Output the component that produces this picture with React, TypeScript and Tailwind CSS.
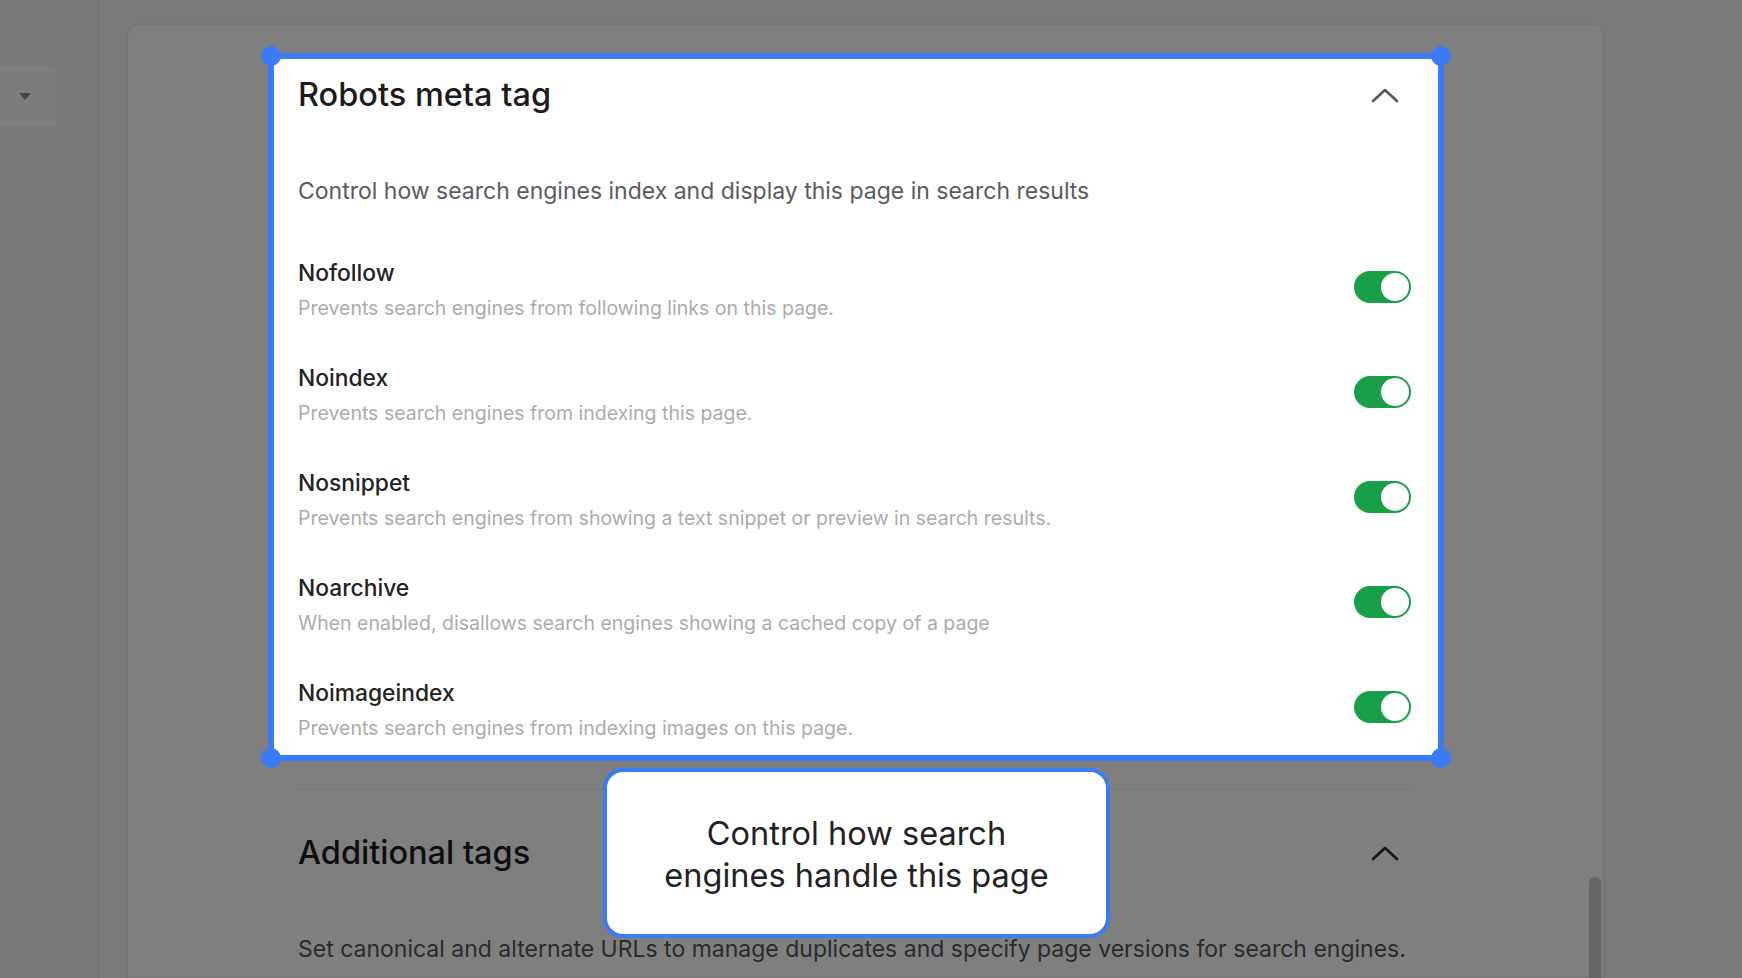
import React from "react";

const rows = [
  { title: "Nofollow", desc: "Prevents search engines from following links on this page." },
  { title: "Noindex", desc: "Prevents search engines from indexing this page." },
  { title: "Nosnippet", desc: "Prevents search engines from showing a text snippet or preview in search results." },
  { title: "Noarchive", desc: "When enabled, disallows search engines showing a cached copy of a page" },
  { title: "Noimageindex", desc: "Prevents search engines from indexing images on this page." },
];

const Chevron = ({ className = "" }: { className?: string }) => (
  <span className={`flex h-10 w-10 items-center justify-center ${className}`}>
    <svg width="28" height="16" viewBox="0 0 28 16" fill="none">
      <polyline points="2,14 14,3 26,14" stroke="currentColor" strokeWidth="2.6" strokeLinecap="round" strokeLinejoin="round" />
    </svg>
  </span>
);

const Toggle = () => (
  <span className="mt-[13px] flex h-[32px] w-[57px] shrink-0 items-center justify-end rounded-full bg-[#17a049] p-[2px]">
    <span className="h-[28px] w-[28px] rounded-full bg-white" />
  </span>
);

const Handle = ({ pos }: { pos: string }) => (
  <span className={`absolute h-[20px] w-[20px] rounded-full bg-[#3b7cf6] ${pos}`} />
);

export default function App() {
  return (
    <div className="relative flex h-[978px] w-full overflow-hidden bg-[#f6f6f6] font-['Inter','Noto_Sans',sans-serif]">
      {/* sidebar */}
      <aside className="w-[99px] shrink-0 border-r border-[#e6e6e6] bg-[#f4f4f4] pt-[64px]">
        <div className="flex h-[64px] w-[58px] items-center justify-end rounded-r-md border border-l-0 border-[#ececec] bg-[#f8f8f8] pr-[26px]">
          <span className="h-0 w-0 border-x-[6px] border-t-[7px] border-x-transparent border-t-[#8a8a8a]" />
        </div>
      </aside>

      {/* main panel */}
      <main className="flex-1 pl-[28px] pr-[138px] pt-[24px]">
        <div className="relative h-full rounded-t-[12px] border border-[#ececec] bg-white pl-[170px] pr-[192px] pt-[28px] shadow-sm">
          <section className="relative z-20 -ml-[30px] -mr-[33px] border-[6px] border-[#3b7cf6] bg-white pb-[13px] pl-6 pr-[27px] pt-4">
            <Handle pos="-left-[13px] -top-[13px]" />
            <Handle pos="-right-[13px] -top-[13px]" />
            <Handle pos="-left-[13px] -bottom-[13px]" />
            <Handle pos="-right-[13px] -bottom-[13px]" />

            <div className="flex h-10 items-center justify-between">
              <h2 className="text-[32.5px] font-medium leading-10 text-[#1c1c1e]">Robots meta tag</h2>
              <Chevron className="mr-[6px] text-[#55565a]" />
            </div>
            <p className="mt-[60px] text-[23px] leading-8 text-[#5a5b5f]">
              Control how search engines index and display this page in search results
            </p>

            <div className="mt-[51px] flex flex-col gap-[41px]">
              {rows.map((r) => (
                <div key={r.title} className="flex items-start justify-between">
                  <div>
                    <div className="text-[22.8px] font-medium leading-[30px] text-[#232325]">{r.title}</div>
                    <div className="mt-[6px] text-[19.5px] leading-7 text-[#acacae]">{r.desc}</div>
                  </div>
                  <Toggle />
                </div>
              ))}
            </div>
          </section>

          <div className="mt-[28px] border-t border-[#eeeeee]" />

          <div className="mt-[43px] flex h-10 items-center justify-between">
            <h2 className="text-[32.5px] font-medium leading-10 text-[#1c1c1e]">Additional tags</h2>
            <Chevron className="mr-[6px] text-[#2e2e30]" />
          </div>
          <p className="mt-[60px] text-[23px] leading-8 text-[#55565a]">
            Set canonical and alternate URLs to manage duplicates and specify page versions for search engines.
          </p>

          {/* scrollbar thumb */}
          <span className="absolute right-[2px] top-[852px] h-[200px] w-[12px] rounded-full bg-[#cecece]" />
        </div>
      </main>

      {/* dim overlay */}
      <div className="absolute inset-0 z-10 bg-black/50" />

      {/* callout */}
      <div className="absolute left-[603px] top-[768px] z-30 flex h-[170px] w-[507px] items-center justify-center rounded-[20px] border-4 border-[#3b7cf6] bg-white pt-[4px]">
        <p className="text-center text-[32.5px] leading-[42px] text-[#222224]">
          Control how search
          <br />
          engines handle this page
        </p>
      </div>
    </div>
  );
}
